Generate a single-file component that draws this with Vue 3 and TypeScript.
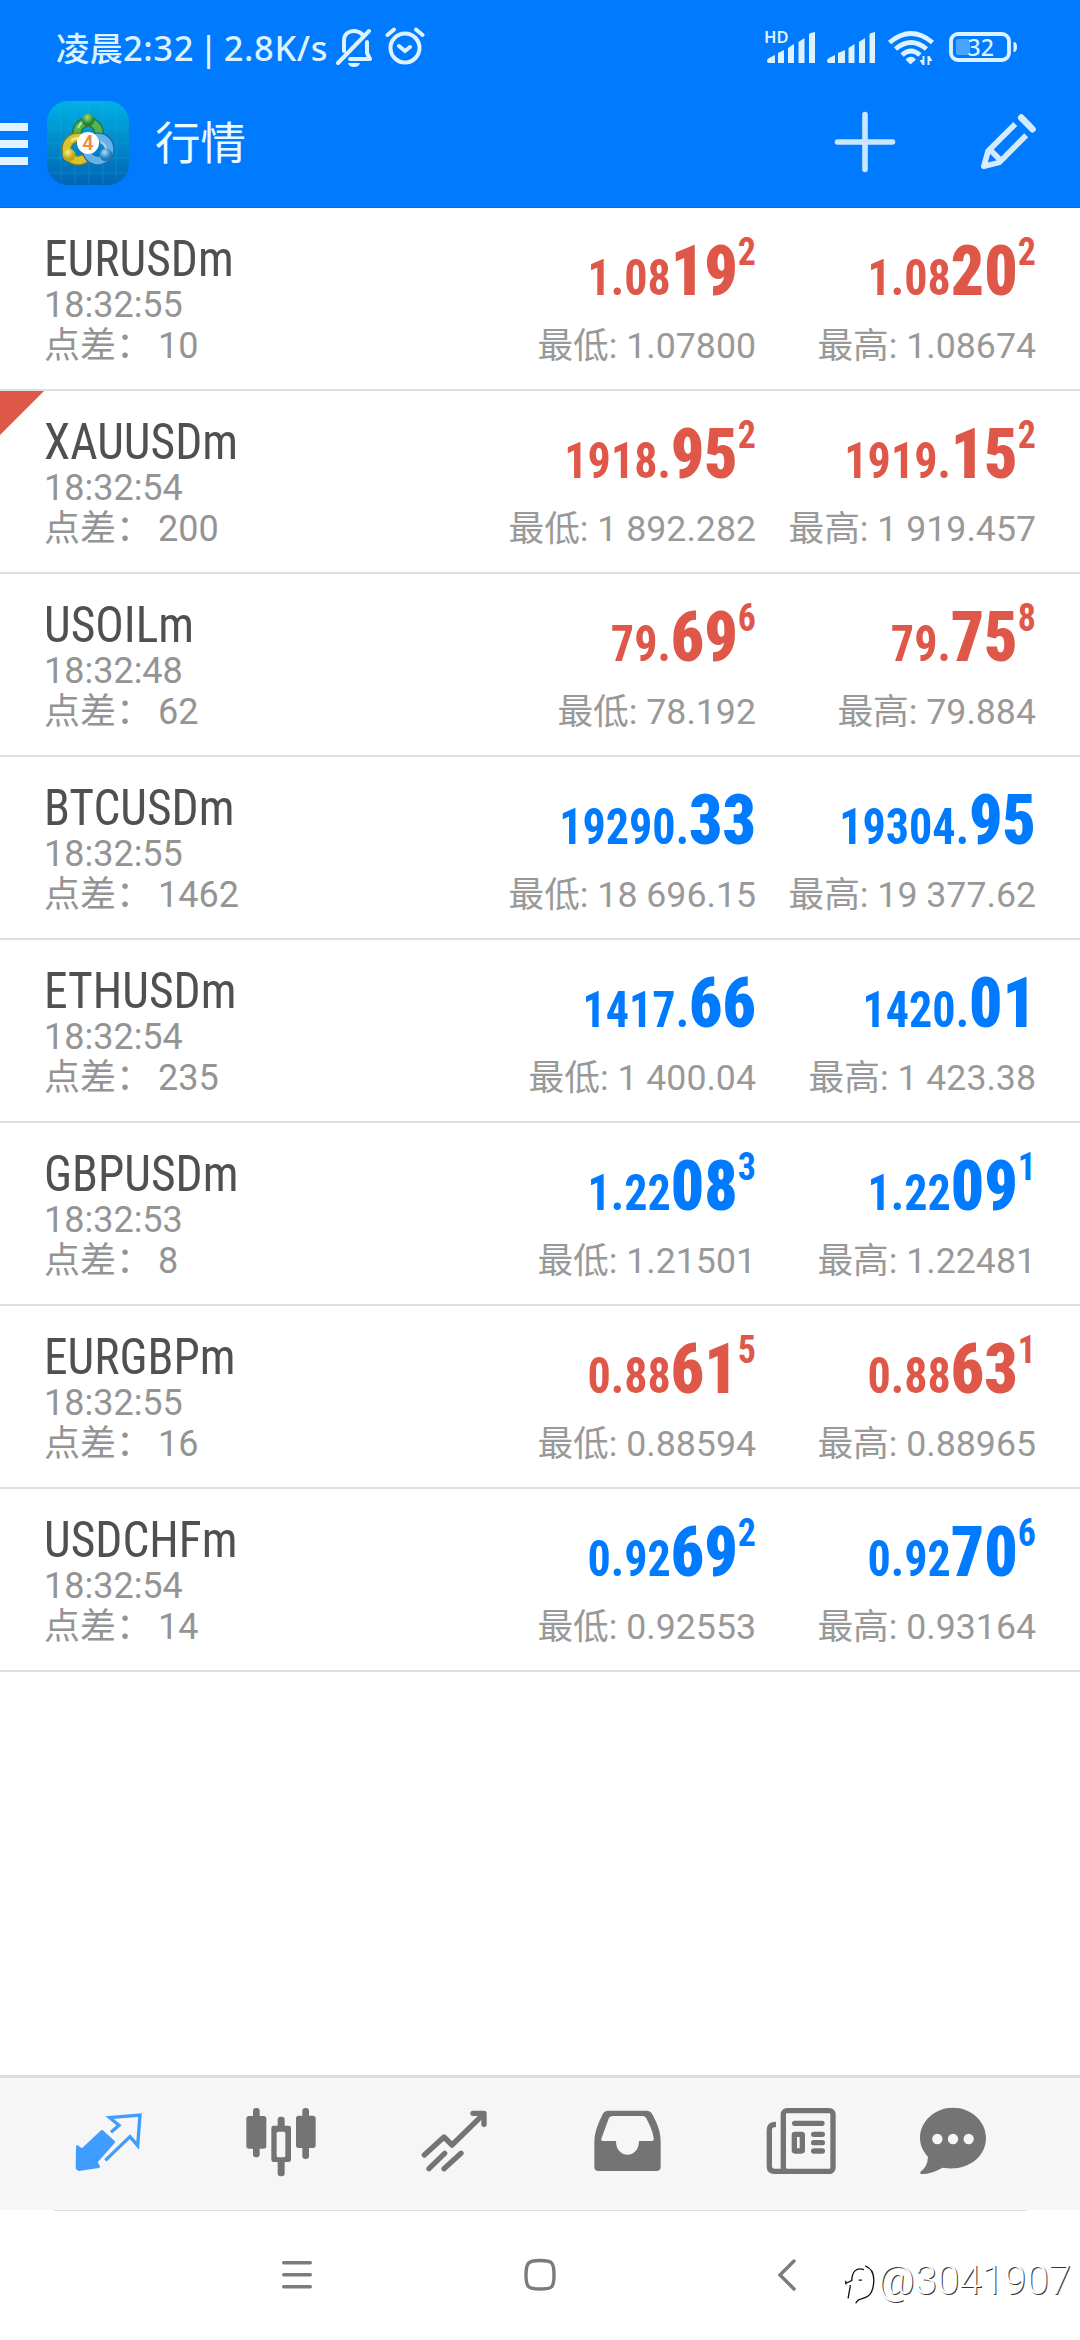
<script setup lang="ts">
interface Price { s: string; b: string; p?: string }
interface Quote {
  name: string; time: string; spread: string; tone: 'up' | 'down'
  bid: Price; ask: Price; low: string; high: string; flag?: boolean
}
const quotes: Quote[] = [
  { name: 'EURUSDm', time: '18:32:55', spread: '10', tone: 'down', bid: { s: '1.08', b: '19', p: '2' }, ask: { s: '1.08', b: '20', p: '2' }, low: '1.07800', high: '1.08674' },
  { name: 'XAUUSDm', time: '18:32:54', spread: '200', tone: 'down', bid: { s: '1918.', b: '95', p: '2' }, ask: { s: '1919.', b: '15', p: '2' }, low: '1 892.282', high: '1 919.457', flag: true },
  { name: 'USOILm', time: '18:32:48', spread: '62', tone: 'down', bid: { s: '79.', b: '69', p: '6' }, ask: { s: '79.', b: '75', p: '8' }, low: '78.192', high: '79.884' },
  { name: 'BTCUSDm', time: '18:32:55', spread: '1462', tone: 'up', bid: { s: '19290.', b: '33' }, ask: { s: '19304.', b: '95' }, low: '18 696.15', high: '19 377.62' },
  { name: 'ETHUSDm', time: '18:32:54', spread: '235', tone: 'up', bid: { s: '1417.', b: '66' }, ask: { s: '1420.', b: '01' }, low: '1 400.04', high: '1 423.38' },
  { name: 'GBPUSDm', time: '18:32:53', spread: '8', tone: 'up', bid: { s: '1.22', b: '08', p: '3' }, ask: { s: '1.22', b: '09', p: '1' }, low: '1.21501', high: '1.22481' },
  { name: 'EURGBPm', time: '18:32:55', spread: '16', tone: 'down', bid: { s: '0.88', b: '61', p: '5' }, ask: { s: '0.88', b: '63', p: '1' }, low: '0.88594', high: '0.88965' },
  { name: 'USDCHFm', time: '18:32:54', spread: '14', tone: 'up', bid: { s: '0.92', b: '69', p: '2' }, ask: { s: '0.92', b: '70', p: '6' }, low: '0.92553', high: '0.93164' },
]
</script>

<template>
  <div class="screen">
    <header class="top">
      <div class="status">
        <span class="clock">凌晨<span class="latin">2:32 | 2.8K/s</span></span>
        <svg class="bell" viewBox="0 0 36 42" fill="none" stroke="#dcf3ff" stroke-width="4">
          <path d="M8 25V15C8 8 13 5 18 5c4 0 7 2 9 4M31 16v11l3 6H14M2 37 33 5" stroke-linecap="round" stroke-linejoin="round" />
          <path d="M12 37h12q-1 4-6 4t-6-4Z" fill="#dcf3ff" stroke="none" />
        </svg>
        <svg class="alarm" viewBox="0 0 40 42" fill="none" stroke="#dcf3ff" stroke-width="4" stroke-linecap="round">
          <circle cx="20" cy="23" r="14.5" /><path d="m14 21 6 5 5-4M2.500 10 9 4.500M37.500 10 31 4.500" />
        </svg>
        <svg class="radio" viewBox="0 0 360 84">
          <g fill="#dcf3ff">
            <text x="44" y="43" class="hd">HD</text>
            <path d="M47 61q0-2 2-3l6-3v8h-6q-2 0-2-2ZM58 53l6-3v13h-6ZM68 48l6-4v19h-6ZM78.500 42l6-4v25h-6ZM89 35q0-2 2-2l4-1v31h-6Z" />
            <path d="M107 61q0-2 2-3l6-3v8h-6q-2 0-2-2ZM118 53l7-3v13h-7ZM128.500 48l6-4v19h-6ZM139 42l6-4v25h-6ZM149.500 35q0-2 2-2l3.500-1v31h-5.500Z" />
            <path d="M190.500 63.500 186.500 59.500q4.500-4 8.500 0Z" stroke="#dcf3ff" stroke-width="1.500" stroke-linejoin="round" />
            <path d="M204.500 56v9h-2l-3-5h3v-4ZM207.500 65v-9h2l3 5h-3v4Z" />
          </g>
          <g fill="none" stroke="#dcf3ff" stroke-width="4.800">
            <path d="M169.500 42.500q21.500-18 43 0M175.500 49q15.500-13 31 0M182 55q9-8 18 0" />
            <rect x="231" y="34" width="58" height="26" rx="7" stroke-width="3.800" />
          </g>
          <rect x="236" y="39" width="14" height="16" rx="2" fill="#4aa4ff" />
          <path d="M293.500 42q3.500 0 3.500 5t-3.500 5Z" fill="#dcf3ff" />
          <text x="247.500" y="55.500" class="pct">32</text>
        </svg>
      </div>
      <div class="bar">
        <span class="menu"><i /><i /><i /></span>
        <svg class="logo" viewBox="0 0 82 84">
          <defs>
            <linearGradient id="bg" x2="0" y2="1"><stop stop-color="#00b1e4" /><stop offset="1" stop-color="#0064b4" /></linearGradient>
            <radialGradient id="gr" cx=".45" cy=".3"><stop stop-color="#a2df76" /><stop offset="1" stop-color="#258235" /></radialGradient>
            <radialGradient id="ye" cx=".4" cy=".3"><stop stop-color="#fff07c" /><stop offset="1" stop-color="#b9a41c" /></radialGradient>
            <radialGradient id="bl" cx=".4" cy=".3"><stop stop-color="#a4dcff" /><stop offset="1" stop-color="#2179bd" /></radialGradient>
          </defs>
          <rect width="82" height="84" rx="21" fill="url(#bg)" />
          <path d="M14 5v74M28 1v82M42 0v84M56 1v82M69 5v74M1 27h80M0 42h82M0 57h82M2 72h78" stroke="#35b7e5" stroke-opacity=".25" />
          <g fill="none" stroke-width="10">
            <circle cx="41" cy="32" r="11" stroke="#257a36" /><circle cx="41" cy="32" r="11" stroke="#55b650" stroke-width="7" />
            <circle cx="31" cy="48" r="11.500" stroke="#827d22" /><circle cx="31" cy="48" r="11.500" stroke="#d8c52e" stroke-width="7.500" />
            <circle cx="51" cy="48" r="11.500" stroke="#21679c" /><circle cx="51" cy="48" r="11.500" stroke="#62b3e6" stroke-width="7.500" />
          </g>
          <path d="M31 27q3-7 9-7M53 41q6 2 6 9M24 40q3-3 7-3" fill="none" stroke="#fff" stroke-opacity=".6" stroke-width="2" />
          <circle cx="41" cy="19" r="6.500" fill="url(#gr)" /><circle cx="22" cy="54" r="6.500" fill="url(#ye)" /><circle cx="59" cy="54" r="6.500" fill="url(#bl)" />
          <circle cx="41" cy="42" r="11" fill="#fff" />
          <text x="41" y="49" class="four">4</text>
        </svg>
        <h1>行情</h1>
        <svg class="add" viewBox="0 0 62 62"><path d="M31 3.500v55M3.500 31h55" stroke="#cbe6ff" stroke-width="5.600" stroke-linecap="round" /></svg>
        <svg class="edit" viewBox="780 338 171 172" fill="none" stroke="#d4eaff" stroke-width="17" stroke-linejoin="round">
          <path d="M886 371 804 453 791 499 838 487 919 405M809 448 843 482" /><path d="m904 352 34 35" stroke-width="20" stroke-linecap="round" />
          <path d="m789 501 5-23 18 18Z" fill="#dceeff" stroke="none" />
        </svg>
      </div>
    </header>

    <main>
      <section v-for="q in quotes" :key="q.name" class="row" :class="q.tone">
        <i v-if="q.flag" class="flag" />
        <div class="sym">
          <div class="name">{{ q.name }}</div>
          <div class="meta">{{ q.time }}</div>
          <div class="meta spread"><span>点差：</span><span>{{ q.spread }}</span></div>
        </div>
        <div class="col">
          <div class="price">{{ q.bid.s }}<b>{{ q.bid.b }}</b><sup v-if="q.bid.p">{{ q.bid.p }}</sup></div>
          <div class="ext">最低: {{ q.low }}</div>
        </div>
        <div class="col">
          <div class="price">{{ q.ask.s }}<b>{{ q.ask.b }}</b><sup v-if="q.ask.p">{{ q.ask.p }}</sup></div>
          <div class="ext">最高: {{ q.high }}</div>
        </div>
      </section>
    </main>

    <nav class="tabs">
      <svg viewBox="0 54 540 396">
        <path d="M232 260 246 270 306 214 341 246 288 306 296 320 236 329 231 324Z" fill="#409cff" stroke="#409cff" stroke-width="8" stroke-linejoin="round" />
        <path d="M333 217 357 196 329 173 420 165 413 257 390 230 316 301" fill="none" stroke="#409cff" stroke-width="10" />
      </svg>
      <svg viewBox="540 54 540 396" fill="#747474">
        <rect x="759" y="144" width="20" height="148" rx="9" /><rect x="739" y="168" width="60" height="98" rx="8" />
        <rect x="907" y="144" width="20" height="153" rx="9" /><rect x="888" y="167" width="59" height="97" rx="8" />
        <rect x="833" y="170" width="21" height="179" rx="9" /><rect x="814" y="197" width="59" height="109" rx="7" />
        <rect x="830" y="215" width="26" height="77" rx="5" fill="#f6f6f6" />
      </svg>
      <svg viewBox="0 54 540 396" fill="none" stroke="#747474" stroke-width="16" stroke-linecap="round" stroke-linejoin="round">
        <path d="M193 285 252 231 276 255 366 167" /><path d="M207 326 254 280M252 326 303 280" /><path d="M339 160H372V193" />
        <path d="M350 158H376V184Z" fill="#747474" stroke="none" />
      </svg>
      <svg viewBox="540 54 540 396" fill="#747474">
        <path fill-rule="evenodd" d="M703 244C704 213 717 184 730 159Q734 153 743 152H861Q871 153 875 160C890 187 902 213 902 244V321Q902 333 889 333H716Q703 333 703 321ZM746 176 724 236Q723 243 731 243H768C768 298 837 298 837 243H875Q883 242 881 234C878 212 868 194 860 177Q857 168 847 168H759Q749 168 746 176Z" />
      </svg>
      <svg viewBox="0 54 540 396" fill="none" stroke="#747474" stroke-width="16">
        <rect x="190" y="152" width="149" height="182" rx="11" /><path d="M168 193Q148 193 148 209V319Q148 334 163 334H200" />
        <path d="M224 190H306M281 223H307M281 248H307M281 273H307" stroke-linecap="round" /><rect x="223" y="223" width="24" height="50" rx="2" stroke-linejoin="round" />
      </svg>
      <svg viewBox="540 54 540 396">
        <path d="M699 143C754 143 798 184 798 234C798 296 735 336 668 323Q633 342 607 342Q599 342 601 336Q623 320 624 291C609 274 600 255 600 234C600 184 644 143 699 143Z" fill="#747474" />
        <g fill="#f6f6f6"><circle cx="652" cy="237" r="15.500" /><circle cx="699" cy="237" r="15.500" /><circle cx="746" cy="237" r="15.500" /></g>
      </svg>
    </nav>

    <footer class="sysnav">
      <svg class="recent" viewBox="0 0 30 30" stroke="#7b7b7b" stroke-width="3.400" stroke-linecap="round"><path d="M1.700 2.700h26.600M1.700 14.700h26.600M1.700 26.700h26.600" /></svg>
      <svg class="home" viewBox="0 0 34 34"><path d="M17 2.500C29 2.500 31 4 31 17S29 31 17 31 3 29 3 17 5 2.500 17 2.500Z" fill="none" stroke="#7b7b7b" stroke-width="3.400" /></svg>
      <svg class="back" viewBox="0 0 20 34"><path d="M17 3 3 17l14 14" fill="none" stroke="#7b7b7b" stroke-width="3.400" stroke-linecap="round" /></svg>
      <svg class="badge" viewBox="28 28 96 124" fill="none" stroke="#111" stroke-width="4">
        <path d="M88 45C64 37 52 52 51 78L32 87M33 79V90M47 92 40 132M72 77H82" />
        <path d="M92 34C120 45 121 72 115 100C108 128 90 131 78 134Q68 136 63 147" />
      </svg>
      <div class="mark">@3041907</div>
    </footer>
  </div>
</template>

<style>
body { background: #fff; }
</style>
<style scoped>
* { box-sizing: border-box; }
.screen { width: 1080px; height: 2340px; display: flex; flex-direction: column; background: #fff; overflow: hidden; font-family: Roboto, "Noto Sans CJK SC", sans-serif; }
svg { display: block; flex: none; }
.top { height: 208px; flex: none; background: #007aff; border-bottom: 1px solid #1669c8; }
.status { height: 84px; display: flex; align-items: flex-start; padding-left: 56px; color: #dcf3ff; }
.clock { width: 280px; padding-top: 23px; font: 500 33.500px/50px "Noto Sans", "Noto Sans CJK SC", sans-serif; white-space: pre; }
.latin { font-size: 34.500px; letter-spacing: .6px; word-spacing: -4.500px; }
.bell { width: 36px; height: 42px; margin-top: 26px; }
.alarm { width: 40px; height: 42px; margin: 25px 0 0 13px; }
.radio { width: 360px; height: 84px; margin-left: 295px; }
.hd { font: 600 16.500px "Noto Sans", sans-serif; }
.pct { font: 500 23px "Noto Sans", sans-serif; fill: #dcf3ff; }
.bar { height: 123px; display: flex; align-items: flex-start; }
.menu { width: 28px; margin-top: 39px; display: flex; flex-direction: column; gap: 9px; }
.menu i { height: 8px; background: #def4ff; }
.logo { width: 82px; height: 84px; margin: 17px 0 0 19px; }
.four { font: 600 20px Roboto, sans-serif; fill: #f28a3c; text-anchor: middle; }
h1 { margin: 22px 0 0 26px; width: 679px; font: 400 45.500px/68px "Noto Sans CJK SC", sans-serif; color: #eafaff; }
.add { width: 62px; height: 62px; margin-top: 27px; }
.edit { width: 57px; height: 57px; margin: 29px 0 0 84px; }
main { flex: 1; }
.row { position: relative; height: 183px; border-bottom: 2px solid #dfdfdf; display: flex; padding: 0 44px; }
.flag { position: absolute; left: 0; top: 0; width: 44px; height: 44px; background: #de5748; clip-path: polygon(0 0, 100% 0, 0 100%); }
.sym { width: 432px; padding-top: 21px; }
.name { height: 56px; font: 400 50px/60px "Roboto Condensed", Roboto, sans-serif; font-stretch: 75%; color: #505050; transform: scaleX(.95); transform-origin: 0 0; }
.meta { font-size: 36px; line-height: 41px; height: 41px; color: #949494; white-space: pre; }
.spread { display: flex; }
.spread span:first-child { width: 114px; }
.col { width: 280px; text-align: right; padding-top: 22px; }
.price { height: 96px; font: 700 50px/96px "Roboto Condensed", Roboto, sans-serif; font-stretch: 75%; white-space: nowrap; transform: scaleX(.922); transform-origin: 100% 0; }
.price b { font-size: 71px; line-height: 1; }
.price sup { font-size: 39px; line-height: 0; vertical-align: 30px; }
.up .price { color: #007aff; }
.down .price { color: #de5748; }
.ext { font-size: 35.700px; line-height: 41px; color: #999; white-space: nowrap; }
.tabs { height: 135px; flex: none; display: flex; background: #f6f6f6; border-top: 3px solid #dedede; }
.tabs svg { width: 180px; height: 132px; }
.sysnav { height: 130px; flex: none; display: flex; padding-left: 282px; background: linear-gradient(#dedede, #dedede) 54px 0 / 973px 1px no-repeat, #fff; }
.recent { width: 30px; height: 30px; margin-top: 50px; }
.home { width: 34px; height: 34px; margin: 48px 0 0 211px; }
.back { width: 20px; height: 34px; margin: 48px 0 0 220px; }
.badge { width: 32px; height: 41px; margin: 54px 0 0 47px; }
.mark { margin: 46px 0 0 2px; font: 300 40px/50px Roboto, sans-serif; letter-spacing: .15px; color: #fff; text-shadow: 1px 1px 0 #333; white-space: nowrap; }
</style>
